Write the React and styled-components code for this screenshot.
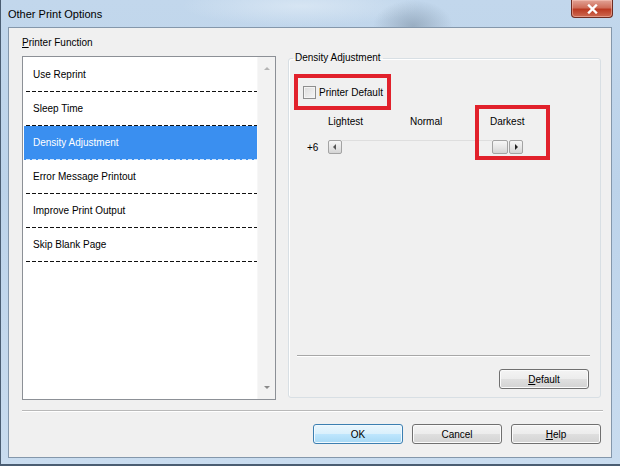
import styled, { createGlobalStyle } from 'styled-components';

const GlobalStyle = createGlobalStyle`
  html, body {
    margin: 0;
    padding: 0;
  }
  body {
    font-family: "Liberation Sans", Arial, sans-serif;
    font-size: 10px;
    color: #000;
    background: #2e3d4d;
  }
`;

const functions = [
  'Use Reprint',
  'Sleep Time',
  'Density Adjustment',
  'Error Message Printout',
  'Improve Print Output',
  'Skip Blank Page',
];

const Window = styled.div`
  width: 620px;
  height: 466px;
  box-sizing: border-box;
  display: flex;
  flex-direction: column;
  border-left: 1px solid #4a5d72;
  border-bottom: 2px solid #4a5d72;
  background:
    radial-gradient(ellipse 40px 26px at 412px 26px, rgba(92, 112, 132, 0.4), transparent),
    radial-gradient(ellipse 120px 20px at 300px 6px, rgba(235, 243, 250, 0.5), transparent),
    linear-gradient(to bottom, #c2d7ec 0%, #bcd3ea 40%, #c9dcef 100%);
`;

const TitleBar = styled.div`
  height: 27px;
  flex-shrink: 0;
  display: flex;
  justify-content: space-between;
  padding: 0 7px 0 7px;
`;

const Title = styled.span`
  align-self: center;
  font-size: 11px;
  color: #000;
`;

const CloseButton = styled.button`
  width: 42px;
  height: 18px;
  padding: 0;
  display: flex;
  align-items: center;
  justify-content: center;
  border: 1px solid #6e2c22;
  border-top: none;
  border-radius: 0 0 4px 4px;
  background: linear-gradient(to bottom, #e2a396 0%, #cf6e5a 45%, #bb3a22 55%, #cd6a52 100%);
  box-shadow: inset 0 0 0 1px rgba(255, 210, 200, 0.45);
`;

const Client = styled.div`
  flex: 1;
  margin: 0 8px 6px 7px;
  border: 1px solid #8497ab;
  background: #f0f0f0;
  display: flex;
  flex-direction: column;
  padding: 8px 10px 13px 13px;
  min-height: 0;
`;

const TopRow = styled.div`
  flex: 1;
  display: flex;
  gap: 12px;
  min-height: 0;
`;

const LeftColumn = styled.div`
  width: 254px;
  display: flex;
  flex-direction: column;
`;

const FieldLabel = styled.div`
  line-height: 14px;
  margin-bottom: 6px;
`;

const ListBox = styled.div`
  flex: 1;
  display: flex;
  background: #fff;
  border: 1px solid #8c9096;
`;

const Items = styled.ul`
  flex: 1;
  list-style: none;
  margin: 0;
  padding: 1px 0 0 1px;
`;

const Item = styled.li`
  height: 34px;
  box-sizing: border-box;
  display: flex;
  align-items: center;
  padding: 0 0 1px 9px;
  color: ${(p) => (p.$selected ? '#fff' : '#000')};
  background:
    repeating-linear-gradient(
      to right,
      ${(p) => (p.$selected ? '#cfe5fc' : '#111')} 0 4px,
      transparent 4px 6px
    ) 2px 100% / calc(100% - 2px) 1px no-repeat,
    ${(p) => (p.$selected ? '#3a8ff0' : '#fff')};
`;

const ScrollBar = styled.div`
  width: 17px;
  background: #f2f2f2;
  border-left: 1px solid #f7f7f7;
  display: flex;
  flex-direction: column;
  justify-content: space-between;
  align-items: center;
  padding: 8px 0 8px;
`;

const Group = styled.fieldset`
  flex: 1;
  min-width: 0;
  margin: 15px 0 2px;
  padding: 0 10px 8px 5px;
  border: 1px solid #d8dfe4;
  border-radius: 3px;
  box-shadow: inset 1px 1px 0 #fff;
  display: flex;
  flex-direction: column;
`;

const GroupTitle = styled.legend`
  padding: 0 2px;
  margin-left: -1px;
  line-height: 14px;
`;

const Highlight = styled.div`
  box-sizing: border-box;
  border: 4px solid #e1212b;
`;

const DefaultBox = styled(Highlight)`
  margin-top: 9px;
  width: 97px;
  height: 36px;
  display: flex;
  align-items: center;
  gap: 3px;
  padding-left: 5px;
`;

const DarkestBox = styled(Highlight)`
  position: absolute;
  left: 181px;
  top: -5px;
  width: 75px;
  height: 55px;
`;

const CheckBox = styled.span`
  width: 13px;
  height: 13px;
  box-sizing: border-box;
  border: 1px solid #8e8f8f;
  background: linear-gradient(135deg, #dcdcdc 0%, #f6f6f6 100%);
  box-shadow: inset 0 0 0 1px #f4f4f4;
`;

const SliderSection = styled.div`
  position: relative;
  padding-top: 5px;
`;

const ScaleLabels = styled.div`
  display: grid;
  grid-template-columns: 82px 80px auto;
  padding-left: 34px;
  line-height: 14px;
`;

const SliderRow = styled.div`
  display: flex;
  align-items: center;
  margin-top: 11px;
  height: 14px;
`;

const Value = styled.span`
  width: 21px;
  padding-left: 13px;
`;

const ArrowButton = styled.span`
  width: ${(p) => p.$width || 14}px;
  height: 14px;
  box-sizing: border-box;
  display: flex;
  align-items: center;
  justify-content: center;
  border: 1px solid #a3a3a3;
  border-radius: 2px;
  background: linear-gradient(to bottom, #f6f6f6 0%, #e6e6e6 55%, #d4d4d4 100%);
  margin-left: ${(p) => p.$gap || 0}px;
`;

const Track = styled.span`
  width: 150px;
  height: 14px;
  box-sizing: border-box;
  border-top: 1px solid #dedede;
  margin-top: -1px;
`;

const Etched = styled.div`
  border-top: 1px solid #a7a7a7;
  border-bottom: 1px solid #fff;
`;

const GroupSeparator = styled(Etched)`
  margin: auto 0 0 3px;
`;

const DialogSeparator = styled(Etched)`
  margin: 10px -2px 0 0;
  border-top-color: #b9b9b9;
`;

const ButtonRow = styled.div`
  display: flex;
  justify-content: flex-end;
  gap: ${(p) => p.$gap || 9}px;
  margin-top: ${(p) => p.$top || 12}px;
  padding-right: ${(p) => p.$right || 0}px;
`;

const Button = styled.button`
  width: 90px;
  height: 20px;
  padding: 0;
  font-family: inherit;
  font-size: 10px;
  color: #000;
  border: 1px solid ${(p) => (p.$primary ? '#3c7fb1' : '#707070')};
  border-radius: 3px;
  background: ${(p) =>
    p.$primary
      ? 'linear-gradient(to bottom, #eaf6fd 0%, #d9f0fc 50%, #bee6fd 51%, #a7d9f5 100%)'
      : 'linear-gradient(to bottom, #f4f4f4 0%, #ececec 50%, #dfdfdf 51%, #d3d3d3 100%)'};
  box-shadow: inset 0 0 0 1px ${(p) => (p.$primary ? '#f0f9ff' : '#fbfbfb')};
`;

const Triangle = ({ dir, color = '#222' }) => {
  const points = {
    left: '5,1 2,4 5,7',
    right: '3,1 6,4 3,7',
    up: '1,5 4,2 7,5',
    down: '1,3 4,6 7,3',
  }[dir];
  return (
    <svg width="8" height="8" viewBox="0 0 8 8">
      <polygon points={points} fill={color} />
    </svg>
  );
};

export default function App() {
  return (
    <>
      <GlobalStyle />
      <Window>
        <TitleBar>
          <Title>Other Print Options</Title>
          <CloseButton aria-label="Close">
            <svg width="11" height="10" viewBox="0 0 11 10">
              <path d="M2 1.5 L9 8.5 M9 1.5 L2 8.5" stroke="#fff" strokeWidth="2.4" strokeLinecap="square" />
            </svg>
          </CloseButton>
        </TitleBar>
        <Client>
          <TopRow>
            <LeftColumn>
              <FieldLabel>
                <u>P</u>rinter Function
              </FieldLabel>
              <ListBox>
                <Items>
                  {functions.map((name) => (
                    <Item key={name} $selected={name === 'Density Adjustment'}>
                      {name}
                    </Item>
                  ))}
                </Items>
                <ScrollBar>
                  <Triangle dir="up" color="#b4b4b4" />
                  <Triangle dir="down" color="#8a8a8a" />
                </ScrollBar>
              </ListBox>
            </LeftColumn>
            <Group>
              <GroupTitle>Density Adjustment</GroupTitle>
              <DefaultBox>
                <CheckBox />
                <span>Printer Default</span>
              </DefaultBox>
              <SliderSection>
                <ScaleLabels>
                  <span>Lightest</span>
                  <span>Normal</span>
                  <span>Darkest</span>
                </ScaleLabels>
                <SliderRow>
                  <Value>+6</Value>
                  <ArrowButton>
                    <Triangle dir="left" color="#555" />
                  </ArrowButton>
                  <Track />
                  <ArrowButton $width={16} />
                  <ArrowButton $gap={1}>
                    <Triangle dir="right" color="#222" />
                  </ArrowButton>
                </SliderRow>
                <DarkestBox />
              </SliderSection>
              <GroupSeparator />
              <ButtonRow $top={12} $right={1}>
                <Button>
                  <u>D</u>efault
                </Button>
              </ButtonRow>
            </Group>
          </TopRow>
          <DialogSeparator />
          <ButtonRow>
            <Button $primary>OK</Button>
            <Button>Cancel</Button>
            <Button>
              <u>H</u>elp
            </Button>
          </ButtonRow>
        </Client>
      </Window>
    </>
  );
}
